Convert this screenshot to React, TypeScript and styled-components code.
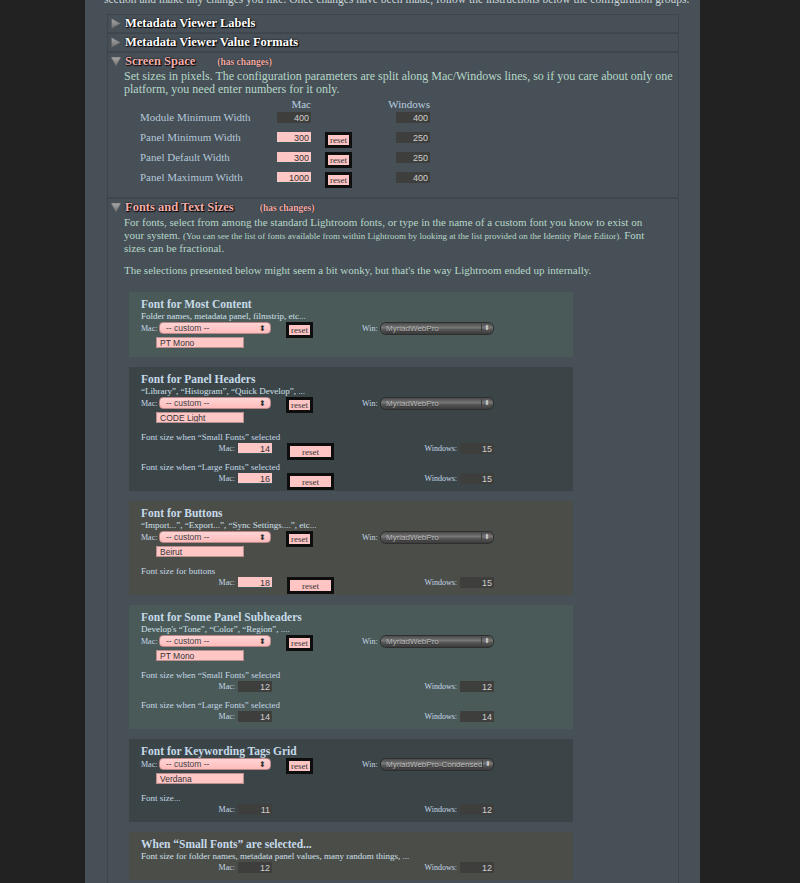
import React from "react"
import styled, { createGlobalStyle } from "styled-components"

const serif = `"Liberation Serif", "Times New Roman", serif`
const sans = `"Liberation Sans", Arial, sans-serif`

type Tone = "green" | "dark" | "olive"

type SizeSpec = {
  label?: string
  mac: string
  win: string
  changed?: boolean
}

type FontSpec = {
  title: string
  sub?: string
  tone: Tone
  macFont?: string
  winFont?: string
  sizes: SizeSpec[]
}

const fontBoxes: FontSpec[] = [
  {
    title: "Font for Most Content",
    sub: "Folder names, metadata panel, filmstrip, etc...",
    tone: "green",
    macFont: "PT Mono",
    winFont: "MyriadWebPro",
    sizes: [],
  },
  {
    title: "Font for Panel Headers",
    sub: "“Library”, “Histogram”, “Quick Develop”, ...",
    tone: "dark",
    macFont: "CODE Light",
    winFont: "MyriadWebPro",
    sizes: [
      { label: "Font size when “Small Fonts” selected", mac: "14", win: "15", changed: true },
      { label: "Font size when “Large Fonts” selected", mac: "16", win: "15", changed: true },
    ],
  },
  {
    title: "Font for Buttons",
    sub: "“Import...”, “Export...”, “Sync Settings....”, etc...",
    tone: "olive",
    macFont: "Beirut",
    winFont: "MyriadWebPro",
    sizes: [{ label: "Font size for buttons", mac: "18", win: "15", changed: true }],
  },
  {
    title: "Font for Some Panel Subheaders",
    sub: "Develop's “Tone”, “Color”, “Region”, ....",
    tone: "green",
    macFont: "PT Mono",
    winFont: "MyriadWebPro",
    sizes: [
      { label: "Font size when “Small Fonts” selected", mac: "12", win: "12" },
      { label: "Font size when “Large Fonts” selected", mac: "14", win: "14" },
    ],
  },
  {
    title: "Font for Keywording Tags Grid",
    tone: "dark",
    macFont: "Verdana",
    winFont: "MyriadWebPro-Condensed",
    sizes: [{ label: "Font size...", mac: "11", win: "12" }],
  },
  {
    title: "When “Small Fonts” are selected...",
    sub: "Font size for folder names, metadata panel values, many random things, ...",
    tone: "olive",
    sizes: [{ mac: "12", win: "12" }],
  },
]

const screenRows = [
  { label: "Module Minimum Width", mac: "400", win: "400", changed: false },
  { label: "Panel Minimum Width", mac: "300", win: "250", changed: true },
  { label: "Panel Default Width", mac: "300", win: "250", changed: true },
  { label: "Panel Maximum Width", mac: "1000", win: "400", changed: true },
]

function Triangle({ open }: { open?: boolean }) {
  return (
    <TriangleSvg width="10" height="11" viewBox="0 0 10 11">
      <defs>
        <linearGradient id={open ? "triDown" : "triRight"} x1="0" y1="0" x2="0" y2="1">
          <stop offset="0" stopColor="#a8a8a8" />
          <stop offset="1" stopColor="#6e6e6e" />
        </linearGradient>
      </defs>
      {open ? (
        <polygon points="0,1 10,1 5,10.5" fill="url(#triDown)" stroke="#5a5a5a" strokeWidth="0.5" />
      ) : (
        <polygon points="0.5,0.5 9.5,5.5 0.5,10.5" fill="url(#triRight)" stroke="#5a5a5a" strokeWidth="0.5" />
      )}
    </TriangleSvg>
  )
}

function Group({
  title,
  open,
  changed,
  tagGap,
  children,
}: {
  title: string
  open?: boolean
  changed?: boolean
  tagGap?: number
  children?: React.ReactNode
}) {
  return (
    <GroupBox>
      <GroupHeader>
        <Triangle open={open} />
        <GroupTitle $changed={changed}>{title}</GroupTitle>
        {changed ? <ChangedTag $gap={tagGap ?? 24}>(has changes)</ChangedTag> : null}
      </GroupHeader>
      {open ? <GroupBody>{children}</GroupBody> : null}
    </GroupBox>
  )
}

function MacSelect() {
  return (
    <PinkSelect>
      <span>-- custom --</span>
      <SelectArrows>⬍</SelectArrows>
    </PinkSelect>
  )
}

function WinSelect({ value }: { value: string }) {
  return (
    <GraySelect>
      <GrayText>{value}</GrayText>
      <GrayArrows>⬍</GrayArrows>
    </GraySelect>
  )
}

function FontBox({ spec }: { spec: FontSpec }) {
  return (
    <FontCard $tone={spec.tone}>
      <CardTitle>{spec.title}</CardTitle>
      {spec.sub ? <CardSub>{spec.sub}</CardSub> : null}
      {spec.macFont ? (
        <>
          <FontRow>
            <TinyLabel>Mac:</TinyLabel>
            <MacSelect />
            <ResetButton>reset</ResetButton>
            <TinyLabel>Win:</TinyLabel>
            <WinSelect value={spec.winFont || ""} />
          </FontRow>
          <FontNameInput readOnly value={spec.macFont} />
        </>
      ) : null}
      {spec.sizes.map((s, i) => (
        <React.Fragment key={i}>
          {s.label ? <SizeLabel>{s.label}</SizeLabel> : null}
          <SizeRow>
            <RightLabel>Mac:</RightLabel>
            <NumInput readOnly value={s.mac} $changed={s.changed} />
            <span />
            {s.changed ? <ResetButton $wide>reset</ResetButton> : <span />}
            <RightLabel>Windows:</RightLabel>
            <NumInput readOnly value={s.win} />
          </SizeRow>
        </React.Fragment>
      ))}
    </FontCard>
  )
}

export default function App() {
  return (
    <>
      <GlobalStyle />
      <Page>
        <Column>
          <Intro>
            section and make any changes you like. Once changes have been made, follow the
            instructions below the configuration groups.
          </Intro>
          <Group title="Metadata Viewer Labels" />
          <Group title="Metadata Viewer Value Formats" />
          <Group title="Screen Space" open changed tagGap={22}>
            <Desc>
              Set sizes in pixels. The configuration parameters are split along Mac/Windows lines,
              so if you care about only one platform, you need enter numbers for it only.
            </Desc>
            <ScreenTable>
              <span />
              <ColHead>Mac</ColHead>
              <span />
              <span />
              <span />
              <ColHead>Windows</ColHead>
              {screenRows.map((r) => (
                <React.Fragment key={r.label}>
                  <RowLabel>{r.label}</RowLabel>
                  <NumInput readOnly value={r.mac} $changed={r.changed} />
                  <span />
                  {r.changed ? <ResetButton>reset</ResetButton> : <span />}
                  <span />
                  <NumInput readOnly value={r.win} />
                </React.Fragment>
              ))}
            </ScreenTable>
          </Group>
          <Group title="Fonts and Text Sizes" open changed tagGap={26}>
            <Desc $size={11} $narrow>
              For fonts, select from among the standard Lightroom fonts, or type in the name of a
              custom font you know to exist on your system.{" "}
              <Small>
                (You can see the list of fonts available from within Lightroom by looking at the
                list provided on the Identity Plate Editor).
              </Small>{" "}
              Font sizes can be fractional.
            </Desc>
            <Desc $size={11} $spaced>
              The selections presented below might seem a bit wonky, but that's the way Lightroom
              ended up internally.
            </Desc>
            <Cards>
              {fontBoxes.map((b) => (
                <FontBox key={b.title} spec={b} />
              ))}
            </Cards>
          </Group>
        </Column>
      </Page>
    </>
  )
}

// --- styled components ---

const GlobalStyle = createGlobalStyle`
  html, body {
    margin: 0;
    padding: 0;
    background: #222222;
    overflow: hidden;
  }
`

const Page = styled.div`
  width: 800px;
  height: 883px;
  display: flex;
  overflow: hidden;
`

const Column = styled.div`
  margin-left: 85px;
  width: 615px;
  box-sizing: border-box;
  padding: 0 21px 0 22px;
  background: #474f57;
  font-family: ${serif};
`

const Intro = styled.div`
  margin: -7px 0 0 -3px;
  height: 21px;
  font-size: 11.5px;
  line-height: 13px;
  color: #c8d6d6;
  white-space: nowrap;
`

const GroupBox = styled.div`
  border: 1px solid #3d444b;
  border-bottom-color: #40474e;
`

const GroupHeader = styled.div`
  height: 17px;
  display: flex;
  align-items: center;
  padding-left: 3px;
`

const TriangleSvg = styled.svg`
  flex: none;
  margin-right: 4px;
`

const GroupTitle = styled.span<{ $changed?: boolean }>`
  font-size: 12.5px;
  font-weight: bold;
  color: ${(p) => (p.$changed ? "#f4aeaa" : "#ffffff")};
  text-shadow: 0 0 2px #000, 1px 1px 1px #000;
  line-height: 17px;
`

const ChangedTag = styled.span<{ $gap: number }>`
  margin-left: ${(p) => p.$gap}px;
  font-size: 9.5px;
  font-weight: bold;
  color: #f4aeaa;
  text-shadow: 0 0 1px #000;
`

const GroupBody = styled.div`
  padding: 0 0 5px 16px;
`

const Desc = styled.div<{ $spaced?: boolean; $size?: number; $narrow?: boolean }>`
  font-size: ${(p) => p.$size ?? 12}px;
  line-height: 13px;
  color: #b6d8c8;
  margin-top: ${(p) => (p.$spaced ? "9px" : "0")};
  max-width: ${(p) => (p.$narrow ? "528px" : "none")};
`

const Small = styled.span`
  font-size: 9px;
  line-height: 10px;
`

const ScreenTable = styled.div`
  margin: 2px 0 0 16px;
  display: grid;
  grid-template-columns: 137px 34px 14px 27px 44px 34px;
  grid-template-rows: 14px;
  grid-auto-rows: 20px;
  align-items: start;
`

const ColHead = styled.span`
  justify-self: end;
  white-space: nowrap;
  font-size: 11px;
  line-height: 12px;
  color: #b8d0e0;
`

const RowLabel = styled.span`
  font-size: 11px;
  line-height: 11px;
  color: #b4c8d8;
`

const NumInput = styled.input<{ $changed?: boolean }>`
  width: 34px;
  height: 11px;
  box-sizing: border-box;
  border: none;
  padding: 0 2px;
  margin: 0;
  text-align: right;
  font-family: ${sans};
  font-size: 9px;
  background: ${(p) => (p.$changed ? "#ffc6c6" : "#3e3e3c")};
  color: ${(p) => (p.$changed ? "#333333" : "#cfcfcf")};
  box-shadow: ${(p) => (p.$changed ? "inset 0 -1px 0 #3a5a5a" : "none")};
  outline: none;
`

const ResetButton = styled.button<{ $wide?: boolean }>`
  width: ${(p) => (p.$wide ? "47px" : "27px")};
  height: ${(p) => (p.$wide ? "17px" : "16px")};
  box-sizing: border-box;
  border: 3px solid #0e0e0e;
  background: #ffc4c4;
  padding: 0;
  font-family: ${serif};
  font-size: 9px;
  line-height: 10px;
  color: #333;
  align-self: start;
`

const Cards = styled.div`
  margin: 15px 0 0 5px;
  width: 444px;
  display: flex;
  flex-direction: column;
  gap: 10px;
`

const toneColors: Record<Tone, string> = {
  green: "#4a5a59",
  dark: "#3b4548",
  olive: "#4b4d49",
}

const FontCard = styled.div<{ $tone: Tone }>`
  background: ${(p) => toneColors[p.$tone]};
  padding: 6px 12px 1px;
  color: #c4d8e6;
`

const CardTitle = styled.div`
  font-size: 11.5px;
  line-height: 13px;
  font-weight: bold;
  color: #c6dae8;
`

const CardSub = styled.div`
  font-size: 9px;
  line-height: 11px;
  color: #d0e0ea;
`

const FontRow = styled.div`
  display: grid;
  grid-template-columns: 18px 127px 76px 19px 112px;
  grid-template-rows: 12px;
  align-items: center;
`

const TinyLabel = styled.span`
  font-size: 8px;
  color: #c4d8e6;
`

const PinkSelect = styled.div`
  width: 112px;
  height: 12px;
  box-sizing: border-box;
  border: 1px solid #b88;
  border-radius: 4px;
  background: linear-gradient(#ffd4d4, #ffbcbc);
  display: flex;
  align-items: center;
  justify-content: space-between;
  padding: 0 4px 0 6px;
  font-family: ${sans};
  font-size: 8.5px;
  color: #444;
`

const SelectArrows = styled.span`
  font-size: 8px;
  color: #333;
`

const GraySelect = styled.div`
  width: 112px;
  height: 11px;
  box-sizing: border-box;
  border-radius: 5px;
  background: linear-gradient(#4a4a4a, #7a7a7a 45%, #5a5a5a 55%, #3a3a3a);
  box-shadow: 0 0 0 1px #2e2e2e;
  display: flex;
  align-items: center;
  justify-content: space-between;
  padding: 0 3px 0 5px;
  font-family: ${sans};
  font-size: 8px;
  color: #bcbcbc;
  white-space: nowrap;
  overflow: hidden;
`

const GrayText = styled.span`
  text-shadow: 0 1px 0 #333;
`

const GrayArrows = styled.span`
  font-size: 7px;
  color: #ccc;
  border-left: 1px solid #3a3a3a;
  padding-left: 2px;
`

const FontNameInput = styled.input`
  display: block;
  margin: 3px 0 8px 15px;
  width: 88px;
  height: 11px;
  box-sizing: border-box;
  border: 1px solid #b89090;
  background: #ffc6c6;
  padding: 0 3px;
  font-family: ${sans};
  font-size: 8.5px;
  color: #333;
  outline: none;
`

const SizeLabel = styled.div`
  margin-top: 1px;
  font-size: 9px;
  line-height: 12px;
  color: #c4d8e6;
`

const SizeRow = styled.div`
  display: grid;
  grid-template-columns: 97px 34px 15px 47px 126px 34px;
  grid-template-rows: 17px;
  align-items: start;
`

const RightLabel = styled.span`
  justify-self: end;
  padding-right: 3px;
  font-size: 8px;
  line-height: 11px;
  color: #c4d8e6;
`
